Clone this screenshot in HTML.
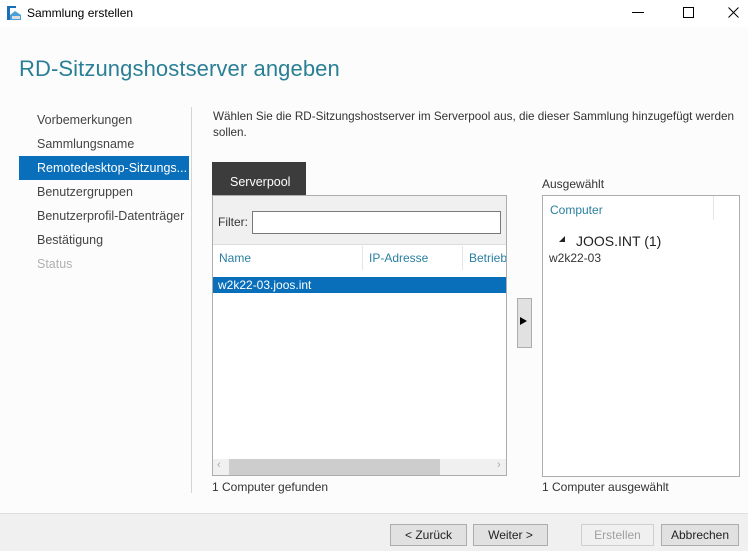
<!DOCTYPE html>
<html><head><meta charset="utf-8"><style>
*{margin:0;padding:0;box-sizing:border-box}
body{width:748px;height:551px;background:#fcfcfc;font-family:"Liberation Sans",sans-serif;font-size:12px;color:#333;position:relative;overflow:hidden}
.a{position:absolute;white-space:nowrap}
.nav{left:37px;font-size:12.5px;color:#444}
.btn{position:absolute;top:524px;height:22px;border:1px solid #adadad;background:#e1e1e1;text-align:center;line-height:20px;font-size:12px;color:#222}
.teal{color:#2a7fa0}
</style></head><body>
<div class="a" style="left:0;top:0;width:748px;height:27px;background:#fff"></div>
<svg class="a" style="left:6px;top:5px" width="16" height="16" viewBox="0 0 16 16"><rect x="1" y="1" width="3" height="14" fill="#1b6fb5"/><rect x="4" y="1" width="6" height="2" fill="#1b6fb5"/><path d="M4 10 L9 6 L15 10 L15 15 L4 15Z" fill="#4a9fd8"/><rect x="6" y="11" width="8" height="3" fill="#ddd"/></svg>
<div class="a" style="left:27px;top:6px;font-size:12px;color:#000">Sammlung erstellen</div>
<div class="a" style="left:632px;top:12px;width:12px;height:1px;background:#000"></div>
<div class="a" style="left:683px;top:7px;width:11px;height:11px;border:1px solid #000"></div>
<svg class="a" style="left:728px;top:7px" width="11" height="11" viewBox="0 0 11 11"><path d="M0.5 0.5L10.5 10.5M10.5 0.5L0.5 10.5" stroke="#000" stroke-width="1"/></svg>
<div class="a" style="left:19px;top:56px;font-size:22px;color:#2a7f96;letter-spacing:0.1px">RD-Sitzungshostserver angeben</div>
<div class="a nav" style="top:113px">Vorbemerkungen</div>
<div class="a nav" style="top:137px">Sammlungsname</div>
<div class="a" style="left:19px;top:156px;width:170px;height:24px;background:#0a6fba"></div>
<div class="a nav" style="top:161px;color:#fff">Remotedesktop-Sitzungs...</div>
<div class="a nav" style="top:185px">Benutzergruppen</div>
<div class="a nav" style="top:209px">Benutzerprofil-Datenträger</div>
<div class="a nav" style="top:233px">Bestätigung</div>
<div class="a nav" style="top:257px;color:#b0b0b0">Status</div>
<div class="a" style="left:191px;top:107px;width:1px;height:386px;background:#d5d5d5"></div>
<div class="a" style="left:213px;top:109px;line-height:16px;color:#333;font-size:11.7px">Wählen Sie die RD-Sitzungshostserver im Serverpool aus, die dieser Sammlung hinzugefügt werden<br>sollen.</div>
<div class="a" style="left:212px;top:162px;width:94px;height:34px;background:#3c3c3c;color:#fff;font-size:12.5px;padding:13px 0 0 18px">Serverpool</div>
<div class="a" style="left:212px;top:195px;width:295px;height:281px;border:1px solid #adadad;background:#fff"></div>
<div class="a" style="left:213px;top:196px;width:293px;height:49px;background:#f0f0f0;border-bottom:1px solid #dcdcdc"></div>
<div class="a" style="left:218px;top:215px">Filter:</div>
<div class="a" style="left:252px;top:211px;width:249px;height:23px;border:1px solid #7a7a7a;background:#fff"></div>
<div class="a" style="left:362px;top:246px;width:1px;height:24px;background:#e5e5e5"></div>
<div class="a" style="left:462px;top:246px;width:1px;height:24px;background:#e5e5e5"></div>
<div class="a teal" style="left:219px;top:251px">Name</div>
<div class="a teal" style="left:369px;top:251px">IP-Adresse</div>
<div class="a teal" style="left:469px;top:251px;width:37px;overflow:hidden">Betrieb</div>
<div class="a" style="left:213px;top:277px;width:293px;height:16px;background:#0a6fba"></div>
<div class="a" style="left:218px;top:278px;color:#fff">w2k22-03.joos.int</div>
<div class="a" style="left:213px;top:459px;width:293px;height:16px;background:#f0f0f0"></div>
<div class="a" style="left:229px;top:459px;width:211px;height:16px;background:#cdcdcd"></div>
<div class="a" style="left:217px;top:459px;color:#aaa;font-size:11px">&lsaquo;</div>
<div class="a" style="left:497px;top:459px;color:#aaa;font-size:11px">&rsaquo;</div>
<div class="a" style="left:212px;top:480px">1 Computer gefunden</div>
<div class="a" style="left:517px;top:298px;width:15px;height:50px;background:#e1e1e1;border:1px solid #adadad"></div>
<div class="a" style="left:520px;top:317px;width:0;height:0;border-left:7px solid #000;border-top:4px solid transparent;border-bottom:4px solid transparent"></div>
<div class="a" style="left:542px;top:177px">Ausgewählt</div>
<div class="a" style="left:542px;top:195px;width:198px;height:282px;border:1px solid #adadad;background:#fff"></div>
<div class="a" style="left:713px;top:196px;width:1px;height:24px;background:#e5e5e5"></div>
<div class="a teal" style="left:550px;top:203px">Computer</div>
<div class="a" style="left:559px;top:236px;width:0;height:0;border-right:6px solid #222;border-top:6px solid transparent"></div>
<div class="a" style="left:576px;top:233px;font-size:14px;color:#222">JOOS.INT (1)</div>
<div class="a" style="left:549px;top:251px">w2k22-03</div>
<div class="a" style="left:542px;top:480px">1 Computer ausgewählt</div>
<div class="a" style="left:0;top:513px;width:748px;height:38px;background:#f0f0f0;border-top:1px solid #dfdfdf"></div>
<div class="btn" style="left:390px;width:77px">&lt; Zurück</div>
<div class="btn" style="left:473px;width:75px">Weiter &gt;</div>
<div class="btn" style="left:581px;width:73px;color:#a0a0a0;border-color:#cfcfcf;background:#f0f0f0">Erstellen</div>
<div class="btn" style="left:661px;width:78px">Abbrechen</div>
</body></html>
